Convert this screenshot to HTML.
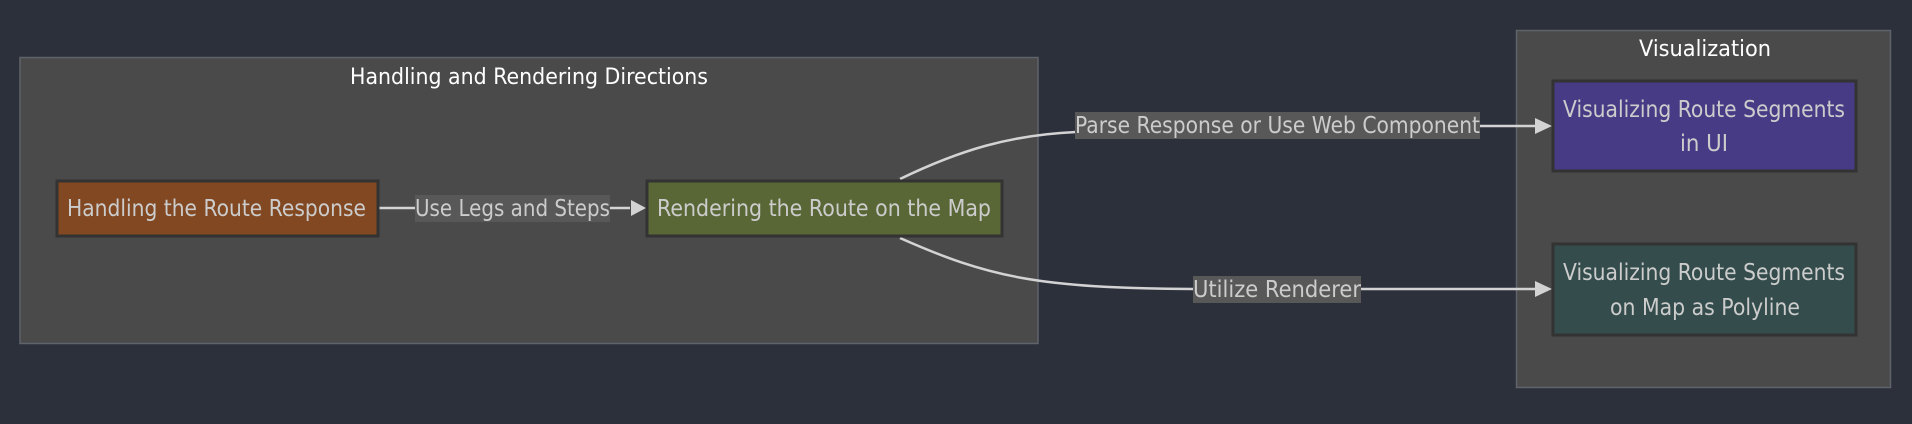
<!DOCTYPE html>
<html><head><meta charset="utf-8"><style>
html,body{margin:0;padding:0;background:#2c303b;}
svg{display:block}
text{font-family:"DejaVu Sans","Liberation Sans",sans-serif;}
</style></head><body>
<svg width="1912" height="424" viewBox="0 0 1912 424" xmlns="http://www.w3.org/2000/svg">
<rect width="1912" height="424" fill="#2c303b"/>
<rect x="20" y="57.5" width="1018" height="286" fill="#4a4a4a" stroke="#5f636b" stroke-width="1.5"/>
<text x="350" y="84" fill="#fff" font-size="22" textLength="358" lengthAdjust="spacingAndGlyphs">Handling and Rendering Directions</text>
<rect x="1516.5" y="30.5" width="374" height="357" fill="#4a4a4a" stroke="#5f636b" stroke-width="1.5"/>
<text x="1639" y="56" fill="#fff" font-size="22" textLength="132" lengthAdjust="spacingAndGlyphs">Visualization</text>
<g stroke="#d3d3d3" stroke-width="2.5" fill="none">
<path d="M378 208 L630 208"/>
<path d="M900 179 C960 150 1010 135 1076 132 L1480 126 L1536 126"/>
<path d="M900 238 C990 278 1040 288 1193 289 L1536 289"/>
</g>
<g fill="#d3d3d3">
<path d="M631 200 L646 208 L631 216 Z"/>
<path d="M1535 118 L1552 126 L1535 134 Z"/>
<path d="M1535 281 L1552 289 L1535 297 Z"/>
</g>
<rect x="415" y="195" width="195" height="27" fill="#585858"/>
<text x="415" y="216" fill="#ccc" font-size="23" textLength="195" lengthAdjust="spacingAndGlyphs">Use Legs and Steps</text>
<rect x="1075" y="112" width="405" height="27" fill="#585858"/>
<text x="1075" y="133" fill="#ccc" font-size="23" textLength="405" lengthAdjust="spacingAndGlyphs">Parse Response or Use Web Component</text>
<rect x="1193" y="276" width="168" height="27" fill="#585858"/>
<text x="1193" y="297" fill="#ccc" font-size="23" textLength="168" lengthAdjust="spacingAndGlyphs">Utilize Renderer</text>
<rect x="57" y="181" width="321" height="55" fill="#814822" stroke="#333" stroke-width="3"/>
<text x="67" y="216" fill="#ccc" font-size="23" textLength="299" lengthAdjust="spacingAndGlyphs">Handling the Route Response</text>
<rect x="647" y="181" width="355" height="55" fill="#586735" stroke="#333" stroke-width="3"/>
<text x="657" y="216" fill="#ccc" font-size="23" textLength="334" lengthAdjust="spacingAndGlyphs">Rendering the Route on the Map</text>
<rect x="1553" y="81" width="303" height="90" fill="#483b86" stroke="#333" stroke-width="3"/>
<text x="1563" y="117" fill="#ccc" font-size="23" textLength="282" lengthAdjust="spacingAndGlyphs">Visualizing Route Segments</text>
<text x="1680" y="151" fill="#ccc" font-size="23" textLength="48" lengthAdjust="spacingAndGlyphs">in UI</text>
<rect x="1553" y="244" width="303" height="91" fill="#344c4c" stroke="#333" stroke-width="3"/>
<text x="1563" y="280" fill="#ccc" font-size="23" textLength="282" lengthAdjust="spacingAndGlyphs">Visualizing Route Segments</text>
<text x="1610" y="315" fill="#ccc" font-size="23" textLength="190" lengthAdjust="spacingAndGlyphs">on Map as Polyline</text>
</svg>
</body></html>
